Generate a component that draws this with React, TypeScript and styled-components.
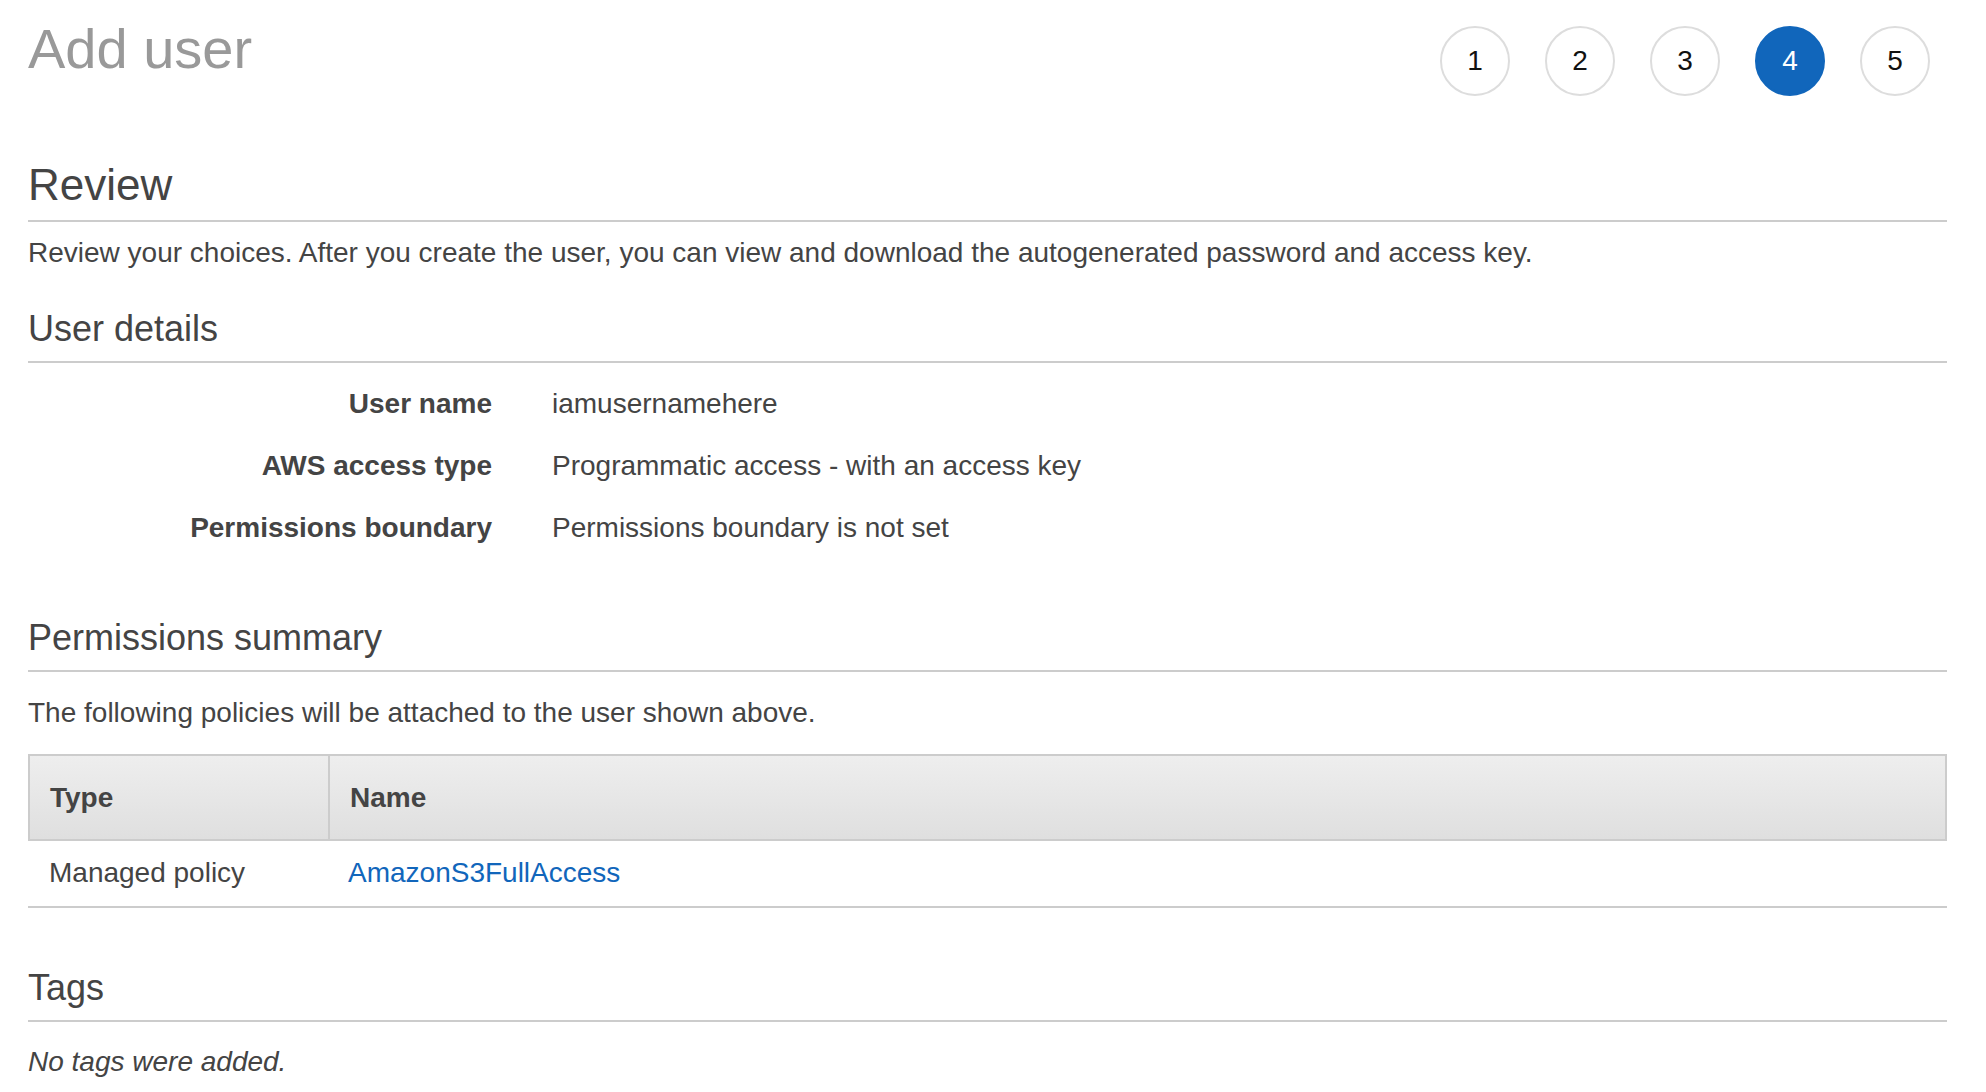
import styled, { createGlobalStyle } from "styled-components";

const GlobalStyle = createGlobalStyle`
  html, body {
    margin: 0;
    padding: 0;
    background: #fff;
  }
  body {
    font-family: "Liberation Sans", Arial, Helvetica, sans-serif;
    color: #444;
  }
`;

const Page = styled.div`
  padding: 0 39px 0 28px;
`;

const Header = styled.div`
  display: flex;
  justify-content: space-between;
  align-items: flex-start;
  padding-top: 17px;
  padding-right: 17px;
`;

const Title = styled.h1`
  margin: 0;
  font-size: 56px;
  line-height: 64px;
  font-weight: 400;
  color: #999;
`;

const Steps = styled.ol`
  display: flex;
  gap: 35px;
  list-style: none;
  margin: 9px 0 0;
  padding: 0;
`;

const Step = styled.li<{ $active?: boolean }>`
  box-sizing: border-box;
  width: 70px;
  height: 70px;
  border-radius: 50%;
  border: 2px solid ${(p) => (p.$active ? "#1166bb" : "#dddddd")};
  background: ${(p) => (p.$active ? "#1166bb" : "#fff")};
  color: ${(p) => (p.$active ? "#fff" : "#111")};
  display: flex;
  align-items: center;
  justify-content: center;
  font-size: 28px;
`;

const PageHeading = styled.h2`
  margin: 63px 0 0;
  padding-bottom: 9px;
  border-bottom: 2px solid #cccccc;
  font-size: 44px;
  line-height: 52px;
  font-weight: 400;
  color: #444;
`;

const SectionHeading = styled.h3<{ $gap: number }>`
  margin: ${(p) => p.$gap}px 0 0;
  padding-bottom: 11px;
  border-bottom: 2px solid #cccccc;
  font-size: 36px;
  line-height: 42px;
  font-weight: 400;
  color: #444;
`;

const Text = styled.p<{ $gap: number; $italic?: boolean }>`
  margin: ${(p) => p.$gap}px 0 0;
  font-size: 28px;
  line-height: 32px;
  font-style: ${(p) => (p.$italic ? "italic" : "normal")};
`;

const Details = styled.dl`
  display: grid;
  grid-template-columns: 464px 1fr;
  column-gap: 60px;
  row-gap: 30px;
  margin: 25px 0 0;
  font-size: 28px;
  line-height: 32px;
`;

const Label = styled.dt`
  text-align: right;
  font-weight: 700;
`;

const Value = styled.dd`
  margin: 0;
`;

const Table = styled.div`
  margin-top: 25px;
  font-size: 28px;
  line-height: 32px;
`;

const HeadRow = styled.div`
  display: grid;
  grid-template-columns: 300px 1fr;
  border: 2px solid #cccccc;
  background: linear-gradient(#eeeeee, #dfdfdf);
`;

const HeadCell = styled.div<{ $divider?: boolean }>`
  box-sizing: border-box;
  padding: 26px 20px 25px;
  font-weight: 700;
  border-right: ${(p) => (p.$divider ? "2px solid #cccccc" : "none")};
`;

const BodyRow = styled.div`
  display: grid;
  grid-template-columns: 300px 1fr;
  border-bottom: 2px solid #cccccc;
`;

const BodyCell = styled.div`
  padding: 16px 20px 17px 21px;
`;

const PolicyLink = styled.a`
  color: #1166bb;
  text-decoration: none;
  margin-left: -1px;
`;

const details = [
  ["User name", "iamusernamehere"],
  ["AWS access type", "Programmatic access - with an access key"],
  ["Permissions boundary", "Permissions boundary is not set"],
];

export default function App() {
  return (
    <Page>
      <GlobalStyle />
      <Header>
        <Title>Add user</Title>
        <Steps>
          {[1, 2, 3, 4, 5].map((n) => (
            <Step key={n} $active={n === 4}>
              {n}
            </Step>
          ))}
        </Steps>
      </Header>

      <PageHeading>Review</PageHeading>
      <Text $gap={15}>
        Review your choices. After you create the user, you can view and download the autogenerated
        password and access key.
      </Text>

      <SectionHeading $gap={39}>User details</SectionHeading>
      <Details>
        {details.map(([label, value]) => [
          <Label key={label}>{label}</Label>,
          <Value key={label + "-v"}>{value}</Value>,
        ])}
      </Details>

      <SectionHeading $gap={73}>Permissions summary</SectionHeading>
      <Text $gap={25}>The following policies will be attached to the user shown above.</Text>
      <Table>
        <HeadRow>
          <HeadCell $divider>Type</HeadCell>
          <HeadCell>Name</HeadCell>
        </HeadRow>
        <BodyRow>
          <BodyCell>Managed policy</BodyCell>
          <BodyCell>
            <PolicyLink href="#">AmazonS3FullAccess</PolicyLink>
          </BodyCell>
        </BodyRow>
      </Table>

      <SectionHeading $gap={59}>Tags</SectionHeading>
      <Text $gap={24} $italic>
        No tags were added.
      </Text>
    </Page>
  );
}
